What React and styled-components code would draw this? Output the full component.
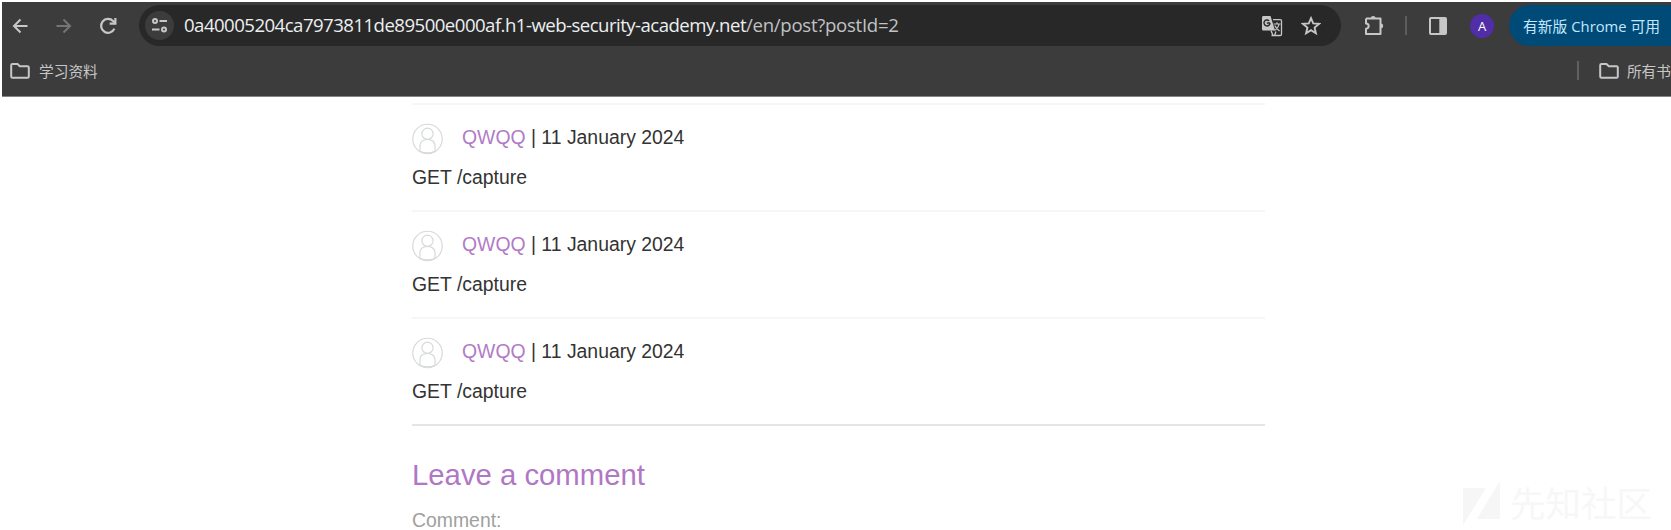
import React from "react";
import styled, { createGlobalStyle } from "styled-components";

const Global = createGlobalStyle`
  * { box-sizing: border-box; }
  html, body { margin: 0; background: #fff; overflow: hidden; }
`;

const uiFont = `"Open Sans", "Noto Sans CJK SC", sans-serif`;

const Window = styled.div`
  position: relative;
  width: 1671px;
  height: 530px;
  padding: 2px 0 0 2px;
  overflow: hidden;
  background: #fff;
`;
const Chrome = styled.header`
  height: 95px;
  background: #3c3c3c;
  border-bottom: 1px solid #858585;
  font-family: ${uiFont};
`;
const Toolbar = styled.div`
  display: flex;
  align-items: center;
  height: 47px;
  padding: 0 0 0 8px;
`;
const Icon = styled.svg`
  display: block;
  flex: none;
  width: ${(p) => p.$w || 20}px;
  height: ${(p) => p.$h || p.$w || 20}px;
  margin-left: ${(p) => p.$gap || 0}px;
  fill: none;
  stroke: ${(p) => p.$color || "#c7c7c7"};
  stroke-width: 2;
`;
const AddressBar = styled.div`
  display: flex;
  align-items: center;
  flex: none;
  width: 1202px;
  height: 41px;
  margin-left: 20px;
  padding-left: 6px;
  border-radius: 21px;
  background: #282828;
`;
const SiteInfo = styled.span`
  display: flex;
  flex: none;
  align-items: center;
  justify-content: center;
  width: 29px;
  height: 29px;
  border-radius: 50%;
  background: #3c3c3c;
`;
const Url = styled.div`
  flex: none;
  width: 1070px;
  margin-left: 10px;
  padding-bottom: 1px;
  font-size: 18.6px;
  line-height: 26px;
  white-space: nowrap;
  color: #c0c2c4;
  letter-spacing: -0.28px;
`;
const Host = styled.span`
  color: #eceff1;
  letter-spacing: -0.53px;
`;
const Divider = styled.span`
  flex: none;
  width: 2px;
  height: ${(p) => p.$h}px;
  margin-left: ${(p) => p.$gap}px;
  background: ${(p) => p.$color};
`;
const Avatar = styled.span`
  flex: none;
  width: 24px;
  height: 24px;
  margin-left: 22px;
  border-radius: 50%;
  background: #512da8;
  color: #fff;
  font-size: 13px;
  line-height: 24px;
  text-align: center;
`;
const UpdateButton = styled.div`
  flex: none;
  width: 180px;
  height: 41px;
  margin-left: 15px;
  padding-left: 14px;
  border-radius: 21px;
  background: #004a77;
  color: #c2e7ff;
  font-size: 14.8px;
  line-height: 42px;
  white-space: nowrap;
`;
const Bookmarks = styled.div`
  display: flex;
  align-items: center;
  height: 43px;
  padding-left: 7px;
  color: #c7c7c7;
  font-size: 14.7px;
  white-space: nowrap;
`;
const BookmarkName = styled.span`
  margin: 0 0 1px ${(p) => p.$gap}px;
`;
const Spacer = styled.span`
  flex: 1;
`;
const AllBookmarks = styled.div`
  display: flex;
  align-items: center;
  width: 94px;
  overflow: hidden;
`;

const Page = styled.main`
  width: 853px;
  margin-left: 410px;
  padding-top: 6px;
  font-family: "Liberation Sans", Arial, sans-serif;
  font-size: 19.4px;
  color: #333332;
`;
const Comment = styled.section`
  height: 106.9px;
  border-top: 2px solid #f6f6f6;
`;
const Meta = styled.div`
  display: flex;
  align-items: flex-start;
  height: 53px;
  padding-top: 18px;
  line-height: 30px;
`;
const Byline = styled.span`
  margin: -1px 0 0 19px;
  white-space: pre;
`;
const Author = styled.span`
  color: #b27bc6;
`;
const Body = styled.p`
  margin: 4px 0 0;
  line-height: 30px;
`;
const FormSection = styled.section`
  border-top: 2px solid #e5e5e5;
`;
const Heading = styled.h2`
  margin: 29px 0 0;
  font-size: 29.3px;
  font-weight: 400;
  line-height: 40px;
  color: #b077c5;
`;
const Label = styled.label`
  display: block;
  margin-top: 10px;
  line-height: 30px;
  color: #a0a0a0;
`;
const Watermark = styled.div`
  position: absolute;
  left: 1463px;
  top: 480px;
  display: flex;
  align-items: flex-start;
  color: #f7f7f7;
  font-family: "Noto Sans CJK SC", sans-serif;
  font-size: 35.5px;
  line-height: 44px;
`;
const WatermarkText = styled.span`
  margin-left: 10px;
  white-space: nowrap;
`;

const Folder = () => (
  <Icon $w={22} $h={18} viewBox="0 0 22 18">
    <path d="M3.5 2h5l2.3 2.3h7.7c.8 0 1.3.5 1.3 1.3v8.8c0 .8-.5 1.3-1.3 1.3h-15c-.8 0-1.3-.5-1.3-1.3V3.3C2.2 2.5 2.7 2 3.5 2z" />
  </Icon>
);

const UserIcon = () => (
  <Icon $w={31} $h={32} $color="#d5dad8" viewBox="0 0 32 32">
    <g strokeWidth="1.2">
      <circle cx="16" cy="16" r="15.2" />
      <circle cx="16" cy="10.6" r="5.8" />
      <path d="M8.2 28.5v-5.2c0-4.2 3-6.8 7.8-6.8s7.8 2.6 7.8 6.8v5.2" />
      <path d="M8.2 28.8q7.8 3.2 15.6 0" />
    </g>
  </Icon>
);

export default function App() {
  return (
    <Window>
      <Global />
      <Chrome>
        <Toolbar>
          <Icon viewBox="0 0 20 20">
            <path d="M17.5 10H4M10.5 3.5L4 10l6.5 6.5" />
          </Icon>
          <Icon $gap={24} $color="#757575" viewBox="0 0 20 20">
            <path d="M2.5 10H16M9.5 3.5L16 10l-6.5 6.5" />
          </Icon>
          <Icon $gap={23} viewBox="0 0 20 20" $w={22}>
            <path d="M15.8 12.4A6.3 6.3 0 1 1 14.6 5.5L16.3 7.3" />
            <path d="M16.7 2.7v5.2h-5.2" />
          </Icon>
          <AddressBar>
            <SiteInfo>
              <Icon $w={17} viewBox="0 0 17 17">
                <circle cx="4" cy="4" r="2" />
                <path d="M8.5 4H16M1 12.5h7.5" />
                <circle cx="13" cy="12.5" r="2" />
              </Icon>
            </SiteInfo>
            <Url>
              <Host>0a40005204ca7973811de89500e000af.h1-web-security-academy.net</Host>
              /en/post?postId=2
            </Url>
            <Icon $w={22} $gap={7} viewBox="0 0 22 22">
              <path d="M2.5 1h7l4.5 14.5H2.5C1.6 15.5 1 15 1 14V2.5C1 1.6 1.6 1 2.5 1z" fill="#c7c7c7" stroke="none" />
              <path d="M9 8H5.8M8.1 5.8A3 3 0 1 0 9 8" stroke="#282828" strokeWidth="1.4" />
              <path d="M12 4.7h7.2c.8 0 1.3.5 1.3 1.3v13.2c0 .8-.5 1.3-1.3 1.3H12l-2-5M10.5 20.5h3l1.5-4" strokeWidth="1.3" />
              <path d="M12.5 9h7M16 7.3V9M18 9c-.5 3-2 5-4.5 6.5M13.8 10.5c1 2.5 2.5 4 4.8 5.5" strokeWidth="1.2" />
            </Icon>
            <Icon $gap={18} viewBox="0 0 20 20">
              <path d="M10 2.2l2.2 5.2 5.8.5-4.4 3.7 1.3 5.6-4.9-3-4.9 3 1.3-5.6L2 7.9l5.8-.5z" strokeWidth="1.9" />
            </Icon>
          </AddressBar>
          <Icon $w={22} $gap={22} viewBox="0 0 22 22">
            <path d="M3 3.5h14.5v5.7M17.5 12.5v6.5H3v-5.3c3.6-.2 3.6-5 0-5.2V3.5M17.5 8.5v5" strokeLinejoin="round" />
            <path d="M7.8 3.3a2.4 2.4 0 0 1 4.8 0zM17.8 8.6a2.4 2.4 0 0 1 0 4.8z" fill="#c7c7c7" stroke="none" />
          </Icon>
          <Divider $h={19} $gap={20} $color="#5d5d5d" />
          <Icon $gap={21} viewBox="0 0 20 20">
            <rect x="2" y="2" width="16" height="16" rx="1" />
            <path d="M11.3 2H18v16h-6.7z" fill="#c7c7c7" stroke="none" />
          </Icon>
          <Avatar>A</Avatar>
          <UpdateButton>有新版 Chrome 可用</UpdateButton>
        </Toolbar>
        <Bookmarks>
          <Folder />
          <BookmarkName $gap={8}>学习资料</BookmarkName>
          <Spacer />
          <AllBookmarks>
            <Divider $h={19} $gap={0} $color="#606060" />
            <Spacer />
            <Folder />
            <BookmarkName $gap={7}>所有书</BookmarkName>
          </AllBookmarks>
        </Bookmarks>
      </Chrome>
      <Page>
        {[1, 2, 3].map((id) => (
          <Comment key={id}>
            <Meta>
              <UserIcon />
              <Byline>
                <Author>QWQQ</Author> | 11 January 2024
              </Byline>
            </Meta>
            <Body>GET /capture</Body>
          </Comment>
        ))}
        <FormSection>
          <Heading>Leave a comment</Heading>
          <Label>Comment:</Label>
        </FormSection>
      </Page>
      <Watermark>
        <Icon $w={37} $h={46} viewBox="0 0 37 46">
          <path d="M0 8h23L0 45zM37 1v38H14z" fill="#f6f6f6" stroke="none" />
        </Icon>
        <WatermarkText>先知社区</WatermarkText>
      </Watermark>
    </Window>
  );
}
